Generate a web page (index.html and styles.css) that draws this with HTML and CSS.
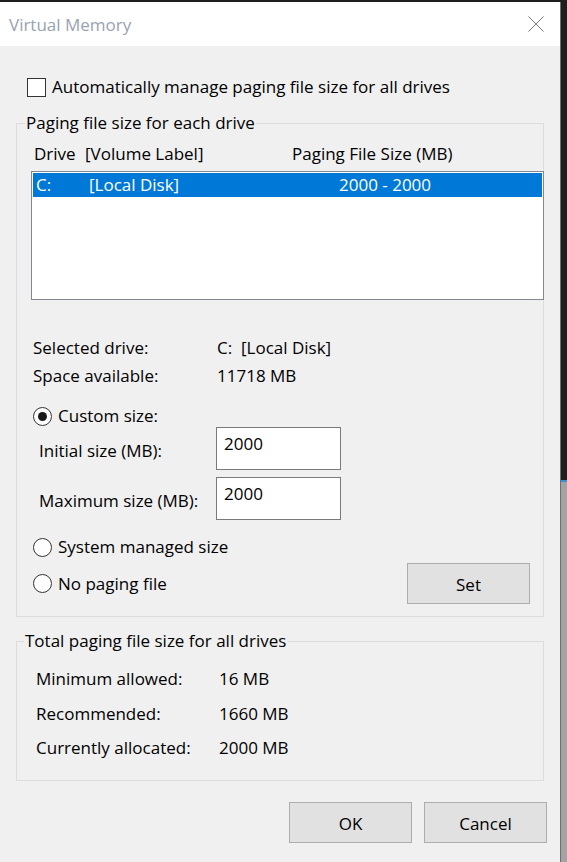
FILE: index.html
```html
<!DOCTYPE html>
<html lang="en">
<head>
    <meta charset="UTF-8">
    <meta name="viewport" content="width=device-width, initial-scale=1.0">
    <title>Virtual Memory</title>
    <link rel="stylesheet" href="styles.css">
</head>
<body>
    <div class="window">
        <div class="titlebar">
            <span class="title">Virtual Memory</span>
            <svg class="close" width="16" height="16" viewBox="0 0 16 16">
                <path d="M0.5 0.5L15.5 15.5M15.5 0.5L0.5 15.5" />
            </svg>
        </div>
        <div class="content">
            <div class="check-row"><span class="checkbox"></span>Automatically manage paging file size for all drives</div>

            <fieldset class="group drives">
                <legend>Paging file size for each drive</legend>
                <div class="list-head">
                    <span>Drive</span><span>[Volume Label]</span><span>Paging File Size (MB)</span>
                </div>
                <div class="listbox">
                    <div class="list-row selected">
                        <span>C:</span><span>[Local Disk]</span><span>2000 - 2000</span>
                    </div>
                </div>
                <div class="info">
                    <span>Selected drive:</span><span>C:&nbsp; [Local Disk]</span>
                    <span>Space available:</span><span>11718 MB</span>
                </div>
                <div class="radio-row custom"><span class="radio checked"></span>Custom size:</div>
                <div class="size-row first">
                    <span class="size-label">Initial size (MB):</span>
                    <div class="textbox">2000</div>
                </div>
                <div class="size-row">
                    <span class="size-label">Maximum size (MB):</span>
                    <div class="textbox">2000</div>
                </div>
                <div class="radio-row system"><span class="radio"></span>System managed size</div>
                <div class="set-row">
                    <div class="radio-row"><span class="radio"></span>No paging file</div>
                    <button class="btn">Set</button>
                </div>
            </fieldset>

            <fieldset class="group totals">
                <legend>Total paging file size for all drives</legend>
                <div class="total-grid">
                    <span>Minimum allowed:</span><span>16 MB</span>
                    <span>Recommended:</span><span>1660 MB</span>
                    <span>Currently allocated:</span><span>2000 MB</span>
                </div>
            </fieldset>

            <div class="actions">
                <button class="btn">OK</button>
                <button class="btn">Cancel</button>
            </div>
        </div>
    </div>
</body>
</html>
```

FILE: styles.css
```css
* {
    margin: 0;
    padding: 0;
    box-sizing: border-box;
}
body {
    background: linear-gradient(to bottom, #1e1e1e 480px, #3a8fd8 480px, #3a8fd8 482px, #a3a3a3 482px);
    font-family: "Open Sans", "Noto Sans", sans-serif;
    font-size: 17px;
    color: #000;
    overflow: hidden;
}
.window {
    width: 561px;
    height: 860px;
    margin-top: 2px;
    background: #f0f0f0;
    border-right: 1px solid #6e6e6e;
}
.titlebar {
    height: 44px;
    background: #fff;
    display: flex;
    align-items: center;
    justify-content: space-between;
    padding: 0 16px 0 9px;
}
.title {
    color: #98a3b3;
    font-size: 17px;
}
.close path {
    stroke: #7a7a7a;
    stroke-width: 1;
    fill: none;
}

.check-row {
    display: flex;
    align-items: center;
    gap: 6px;
    line-height: 22px;
    margin-top: 30px;
    padding-left: 27px;
}
.checkbox {
    width: 19px;
    height: 19px;
    border: 1px solid #333;
    background: #fff;
}

.group {
    width: 528px;
    margin: 14px 0 0 16px;
    border: 1px solid #dcdcdc;
    min-width: 0;
}
.group legend {
    margin-left: 8px;
    padding: 0 1px;
    line-height: 22px;
}
.drives {
    padding-bottom: 12px;
}
.list-head {
    display: grid;
    grid-template-columns: 51px 207px auto;
    line-height: 22px;
    margin-top: 9px;
    padding-left: 17px;
}
.listbox {
    width: 513px;
    height: 129px;
    margin: 6px 0 0 14px;
    border: 1px solid #828790;
    background: #fff;
    padding: 1px;
}
.list-row {
    display: grid;
    grid-template-columns: 53px 250px auto;
    height: 24px;
    line-height: 24px;
    padding-left: 3px;
}
.list-row.selected {
    background: #0078d7;
    color: #fff;
}
.info {
    display: grid;
    grid-template-columns: 184px auto;
    row-gap: 6px;
    line-height: 22px;
    margin-top: 37px;
    padding-left: 16px;
}
.radio-row {
    display: flex;
    align-items: center;
    gap: 6px;
    line-height: 20px;
    padding-left: 16px;
}
.radio {
    width: 19px;
    height: 19px;
    border: 1px solid #333;
    border-radius: 50%;
    background: #fff;
    display: grid;
    place-items: center;
}
.radio.checked::after {
    content: "";
    width: 9px;
    height: 9px;
    border-radius: 50%;
    background: #1a1a1a;
}
.custom {
    margin-top: 19px;
}
.size-row {
    display: grid;
    grid-template-columns: 177px 125px;
    align-items: center;
    margin-top: 7px;
    padding-left: 22px;
}
.size-row.first {
    margin-top: 1px;
}
.size-label {
    padding-top: 4px;
    line-height: 22px;
}
.textbox {
    height: 43px;
    border: 1px solid #7a7a7a;
    background: #fff;
    padding: 5px 0 0 7px;
    line-height: 22px;
}
.system {
    margin-top: 17px;
}
.set-row {
    display: flex;
    align-items: center;
    justify-content: space-between;
    margin-top: 6px;
    padding-right: 13px;
}
.btn {
    width: 123px;
    height: 41px;
    padding-top: 2px;
    background: #e1e1e1;
    border: 1px solid #adadad;
    font: inherit;
    color: #000;
}

.totals {
    margin-top: 13px;
    padding-bottom: 21px;
}
.totals legend {
    margin-left: 7px;
}
.total-grid {
    display: grid;
    grid-template-columns: 183px auto;
    row-gap: 12.5px;
    line-height: 22px;
    margin-top: 16px;
    padding-left: 19px;
}
.actions {
    display: flex;
    justify-content: flex-end;
    gap: 12px;
    margin-top: 21px;
    padding-right: 13px;
}
```
